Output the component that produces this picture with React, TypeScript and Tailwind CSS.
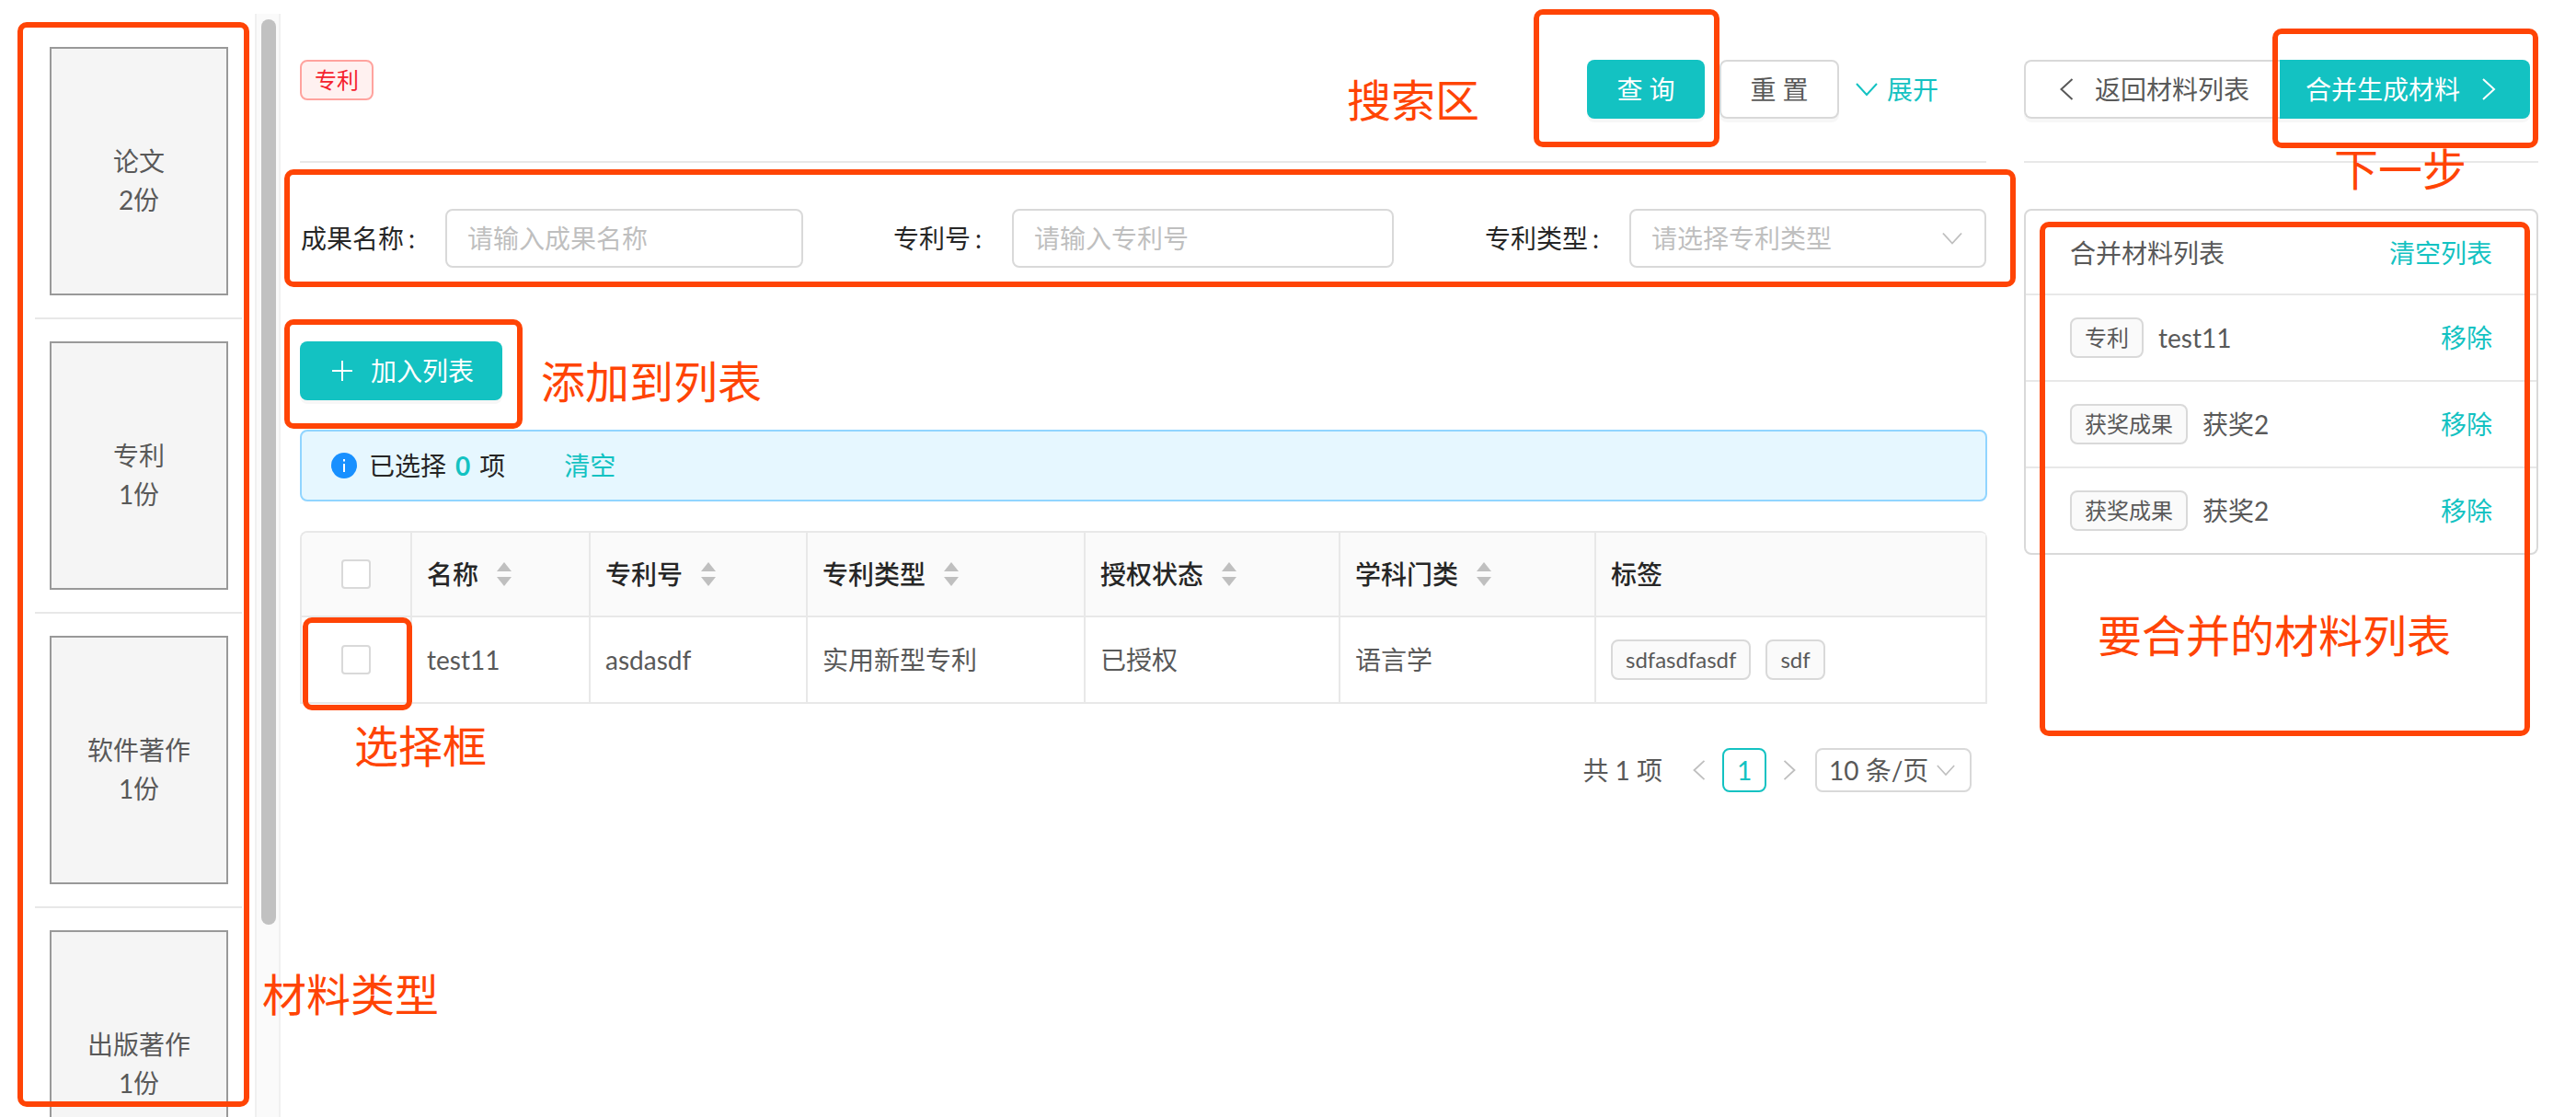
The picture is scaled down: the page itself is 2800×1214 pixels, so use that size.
import React from "react";

const materials = [
  { name: "论文", count: "2份" },
  { name: "专利", count: "1份" },
  { name: "软件著作", count: "1份" },
  { name: "出版著作", count: "1份" },
];

const columns = [
  { title: "名称", width: "w-[194px]", value: "test11" },
  { title: "专利号", width: "w-[236px]", value: "asdasdf" },
  { title: "专利类型", width: "w-[302px]", value: "实用新型专利" },
  { title: "授权状态", width: "w-[277px]", value: "已授权" },
  { title: "学科门类", width: "w-[278px]", value: "语言学" },
];

const merged = [
  { tag: "专利", name: "test11" },
  { tag: "获奖成果", name: "获奖2" },
  { tag: "获奖成果", name: "获奖2" },
];

const Down = ({ className }: { className: string }) => (
  <svg className={className} viewBox="0 0 24 14" fill="none" stroke="currentColor" strokeWidth="2">
    <polyline points="1,1 12,13 23,1" />
  </svg>
);

const Left = ({ className }: { className: string }) => (
  <svg className={className} viewBox="0 0 14 24" fill="none" stroke="currentColor" strokeWidth="2">
    <polyline points="13,1 1,12 13,23" />
  </svg>
);

const Right = ({ className }: { className: string }) => (
  <svg className={className} viewBox="0 0 14 24" fill="none" stroke="currentColor" strokeWidth="2">
    <polyline points="1,1 13,12 1,23" />
  </svg>
);

const Sorter = () => (
  <svg className="w-[16px] h-[26px] ml-[20px] text-[#bfbfbf]" viewBox="0 0 16 26" fill="currentColor">
    <polygon points="8,0 16,10 0,10" />
    <polygon points="0,16 16,16 8,26" />
  </svg>
);

const Checkbox = () => (
  <div className="w-[32px] h-[32px] bg-white border-2 border-[#d9d9d9] rounded-[4px]" />
);

const Tag = ({ children }: { children: React.ReactNode }) => (
  <span className="h-[44px] px-[14px] flex items-center bg-[#fafafa] border-2 border-[#d9d9d9] rounded-[8px] text-[24px] text-[#595959]">
    {children}
  </span>
);

const App = () => {
  return (
    <div className="relative flex w-[2800px] h-[1214px] overflow-hidden bg-white text-[28px] font-['Lato','Noto_Sans_CJK_SC',sans-serif]">
      {/* material types */}
      <div className="w-[277px] shrink-0 pt-[51px] pl-[38px]">
        {materials.map((item) => (
          <div key={item.name} className="w-[225px] pl-[16px] pb-[24px] mb-[24px] border-b-2 border-[#e8e8e8]">
            <div className="w-[194px] h-[270px] pt-[19px] flex flex-col items-center justify-center bg-[#f5f5f5] border-2 border-[#999999] text-[#595959] leading-[42px]">
              <span>{item.name}</span>
              <span>{item.count}</span>
            </div>
          </div>
        ))}
      </div>

      <div className="w-[28px] shrink-0 mt-[15px] pt-[6px] pl-[5px] bg-[#fafafa] border-x-2 border-[#f0f0f0]">
        <div className="w-[16px] h-[984px] rounded-full bg-[#c1c1c1]" />
      </div>

      {/* search + table */}
      <div className="w-[1834px] shrink-0 ml-[21px] pt-[65px]">
        <div className="flex justify-between w-[1833px] h-[112px] border-b-2 border-[#e8e8e8]">
          <span className="h-[44px] w-[80px] flex items-center justify-center bg-[#fff1f0] border-2 border-[#ffa39e] rounded-[8px] text-[24px] text-[#f5222d]">
            专利
          </span>
          <div className="flex items-start pr-[52px]">
            <button className="w-[128px] h-[64px] bg-[#13c2c2] text-white rounded-[8px] shadow-[0_4px_0_rgba(0,0,0,0.03)]">查 询</button>
            <button className="w-[130px] h-[64px] ml-[16px] bg-white border-2 border-[#d9d9d9] text-[#595959] rounded-[8px] shadow-[0_4px_0_rgba(0,0,0,0.03)]">重 置</button>
            <div className="flex items-center h-[64px] ml-[18px] text-[#13c2c2]">
              <Down className="w-[24px] h-[16px] mr-[10px]" />
              <span>展开</span>
            </div>
          </div>
        </div>

        <div className="flex mt-[50px] w-[1833px]">
          <div className="w-[547px] flex items-center justify-end">
            <label className="mr-[33px] whitespace-nowrap text-[#262626]">成果名称<span className="ml-[5px]">:</span></label>
            <div className="w-[389px] h-[64px] pl-[22px] flex items-center border-2 border-[#d9d9d9] rounded-[8px] text-[#bfbfbf]">请输入成果名称</div>
          </div>
          <div className="w-[642px] flex items-center justify-end">
            <label className="mr-[33px] whitespace-nowrap text-[#262626]">专利号<span className="ml-[5px]">:</span></label>
            <div className="w-[415px] h-[64px] pl-[22px] flex items-center border-2 border-[#d9d9d9] rounded-[8px] text-[#bfbfbf]">请输入专利号</div>
          </div>
          <div className="w-[644px] flex items-center justify-end">
            <label className="mr-[33px] whitespace-nowrap text-[#262626]">专利类型<span className="ml-[5px]">:</span></label>
            <div className="w-[388px] h-[64px] pl-[22px] pr-[24px] flex items-center justify-between border-2 border-[#d9d9d9] rounded-[8px] text-[#bfbfbf]">
              请选择专利类型
              <Down className="w-[22px] h-[14px] text-[#bfbfbf]" />
            </div>
          </div>
        </div>

        <button className="flex items-center mt-[80px] w-[220px] h-[64px] pl-[35px] bg-[#13c2c2] text-white rounded-[8px] shadow-[0_4px_0_rgba(0,0,0,0.03)]">
          <svg className="w-[22px] h-[22px] mr-[20px]" viewBox="0 0 22 22" fill="none" stroke="currentColor" strokeWidth="2">
            <path d="M11 0v22M0 11h22" />
          </svg>
          加入列表
        </button>

        <div className="flex items-center mt-[32px] h-[78px] pl-[32px] bg-[#e6f7ff] border-2 border-[#91d5ff] rounded-[8px] text-[#262626]">
          <svg className="w-[28px] h-[28px] mr-[13px]" viewBox="0 0 28 28">
            <circle cx="14" cy="14" r="14" fill="#1890ff" />
            <rect x="13" y="12" width="2" height="9" fill="#fff" />
            <rect x="13" y="7" width="2" height="2.5" fill="#fff" />
          </svg>
          <span>已选择</span>
          <span className="ml-[10px] mr-[10px] font-bold text-[#13c2c2]">0</span>
          <span>项</span>
          <span className="ml-[64px] text-[#13c2c2]">清空</span>
        </div>

        <div className="mt-[32px] border-l-2 border-t-2 border-[#e8e8e8] rounded-t-[8px] overflow-hidden">
          <div className="flex h-[92px] bg-[#fafafa] font-medium text-[#262626]">
            <div className="w-[120px] flex items-center justify-center border-r-2 border-b-2 border-[#e8e8e8]">
              <Checkbox />
            </div>
            {columns.map((col) => (
              <div key={col.title} className={`${col.width} pl-[16px] flex items-center border-r-2 border-b-2 border-[#e8e8e8]`}>
                {col.title}
                <Sorter />
              </div>
            ))}
            <div className="w-[425px] pl-[16px] flex items-center border-r-2 border-b-2 border-[#e8e8e8]">标签</div>
          </div>
          <div className="flex h-[94px] text-[#595959]">
            <div className="w-[120px] flex items-center justify-center border-r-2 border-b-2 border-[#e8e8e8]">
              <Checkbox />
            </div>
            {columns.map((col) => (
              <div key={col.title} className={`${col.width} pl-[16px] flex items-center border-r-2 border-b-2 border-[#e8e8e8]`}>
                {col.value}
              </div>
            ))}
            <div className="w-[425px] pl-[16px] flex items-center gap-[16px] border-r-2 border-b-2 border-[#e8e8e8]">
              <Tag>sdfasdfasdf</Tag>
              <Tag>sdf</Tag>
            </div>
          </div>
        </div>

        <div className="flex items-center justify-end mt-[48px] pr-[17px] h-[48px] text-[#595959]">
          <span>共 1 项</span>
          <Left className="w-[14px] h-[22px] ml-[33px] text-[#bfbfbf]" />
          <div className="w-[48px] h-[48px] ml-[18px] flex items-center justify-center border-2 border-[#13c2c2] rounded-[8px] text-[#13c2c2]">1</div>
          <Right className="w-[14px] h-[22px] ml-[18px] text-[#bfbfbf]" />
          <div className="w-[170px] h-[48px] ml-[21px] pl-[13px] pr-[16px] flex items-center justify-between border-2 border-[#d9d9d9] rounded-[8px]">
            10 条/页
            <Down className="w-[20px] h-[12px] text-[#bfbfbf]" />
          </div>
        </div>
      </div>

      {/* merge list */}
      <div className="w-[559px] shrink-0 ml-[40px] pt-[65px]">
        <div className="h-[112px] border-b-2 border-[#e8e8e8]">
          <div className="flex w-[550px]">
            <button className="flex items-center w-[278px] h-[64px] pl-[36px] bg-white border-2 border-r-0 border-[#d9d9d9] rounded-l-[8px] text-[#595959] shadow-[0_4px_0_rgba(0,0,0,0.03)]">
              <Left className="w-[17px] h-[24px] mr-[22px]" />
              返回材料列表
            </button>
            <button className="flex items-center w-[272px] h-[64px] pl-[28px] bg-[#13c2c2] text-white rounded-r-[8px] shadow-[0_4px_0_rgba(0,0,0,0.03)]">
              合并生成材料
              <Right className="w-[16px] h-[24px] ml-[23px]" />
            </button>
          </div>
        </div>

        <div className="mt-[50px] border-2 border-[#d9d9d9] rounded-[8px]">
          <div className="flex items-center justify-between h-[90px] pl-[48px] pr-[48px] pt-[2px] text-[#595959]">
            <span>合并材料列表</span>
            <span className="text-[#13c2c2]">清空列表</span>
          </div>
          {merged.map((row, i) => (
            <div key={i} className="flex items-center h-[94px] pl-[48px] pr-[48px] border-t-2 border-[#e8e8e8] text-[#595959]">
              <Tag>{row.tag}</Tag>
              <span className="ml-[16px]">{row.name}</span>
              <span className="ml-auto text-[#13c2c2]">移除</span>
            </div>
          ))}
        </div>
      </div>

      {/* annotations drawn over the screenshot */}
      <div className="absolute left-[19px] top-[24px] w-[252px] h-[1179px] border-[6px] border-[#ff4405] rounded-[10px]" />
      <div className="absolute left-[309px] top-[184px] w-[1882px] h-[128px] border-[6px] border-[#ff4405] rounded-[10px]" />
      <div className="absolute left-[1667px] top-[10px] w-[202px] h-[150px] border-[6px] border-[#ff4405] rounded-[10px]" />
      <div className="absolute left-[2470px] top-[31px] w-[289px] h-[130px] border-[6px] border-[#ff4405] rounded-[10px]" />
      <div className="absolute left-[309px] top-[347px] w-[259px] h-[119px] border-[6px] border-[#ff4405] rounded-[10px]" />
      <div className="absolute left-[329px] top-[671px] w-[119px] h-[101px] border-[6px] border-[#ff4405] rounded-[10px]" />
      <div className="absolute left-[2217px] top-[241px] w-[533px] h-[559px] border-[6px] border-[#ff4405] rounded-[10px]" />

      <span className="absolute left-[1464px] top-[73px] text-[48px] leading-[72px] text-[#ff4405]">搜索区</span>
      <span className="absolute left-[2537px] top-[148px] text-[48px] leading-[72px] text-[#ff4405]">下一步</span>
      <span className="absolute left-[588px] top-[379px] text-[48px] leading-[72px] text-[#ff4405]">添加到列表</span>
      <span className="absolute left-[385px] top-[775px] text-[48px] leading-[72px] text-[#ff4405]">选择框</span>
      <span className="absolute left-[285px] top-[1045px] text-[48px] leading-[72px] text-[#ff4405]">材料类型</span>
      <span className="absolute left-[2280px] top-[655px] text-[48px] leading-[72px] text-[#ff4405]">要合并的材料列表</span>
    </div>
  );
};

export default App;
